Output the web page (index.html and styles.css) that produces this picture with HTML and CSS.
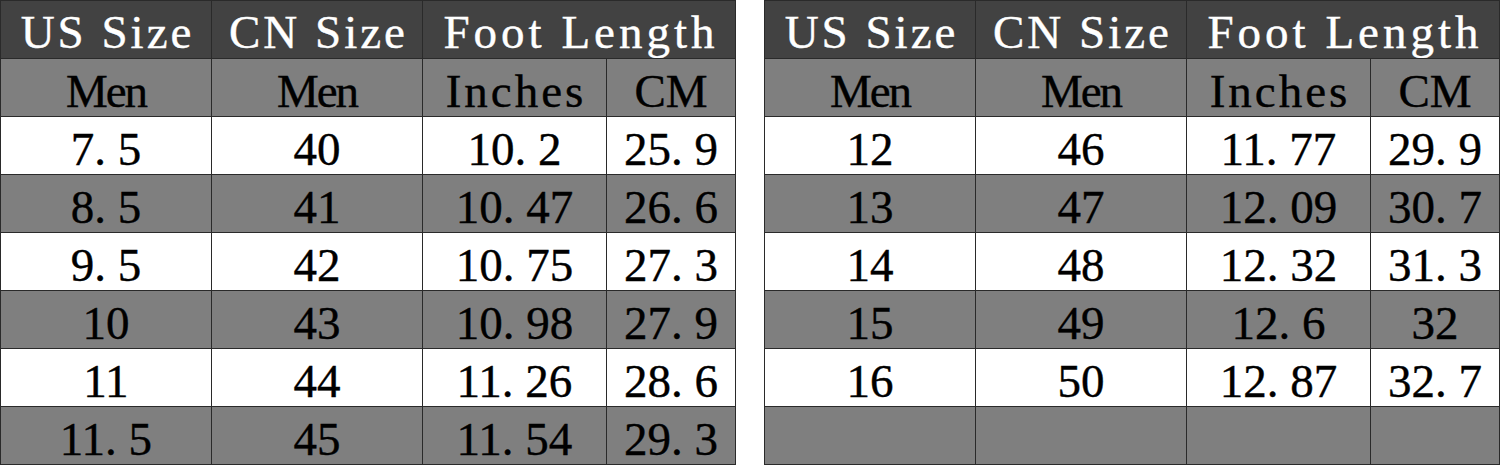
FILE: index.html
```html
<!DOCTYPE html>
<html>
<head>
<meta charset="utf-8">
<link rel="stylesheet" href="styles.css">
</head>
<body>
<div class="page">
  <div class="chart">
    <div class="cell head">US Size</div>
    <div class="cell head">CN Size</div>
    <div class="cell head span2">Foot Length</div>
    <div class="cell sub men">Men</div>
    <div class="cell sub men">Men</div>
    <div class="cell sub inches">Inches</div>
    <div class="cell sub">CM</div>

    <div class="cell w">7. 5</div><div class="cell w">40</div><div class="cell w">10. 2</div><div class="cell w">25. 9</div>
    <div class="cell g">8. 5</div><div class="cell g">41</div><div class="cell g">10. 47</div><div class="cell g">26. 6</div>
    <div class="cell w">9. 5</div><div class="cell w">42</div><div class="cell w">10. 75</div><div class="cell w">27. 3</div>
    <div class="cell g">10</div><div class="cell g">43</div><div class="cell g">10. 98</div><div class="cell g">27. 9</div>
    <div class="cell w">11</div><div class="cell w">44</div><div class="cell w">11. 26</div><div class="cell w">28. 6</div>
    <div class="cell g">11. 5</div><div class="cell g">45</div><div class="cell g">11. 54</div><div class="cell g">29. 3</div>
  </div>
  <div class="chart">
    <div class="cell head">US Size</div>
    <div class="cell head">CN Size</div>
    <div class="cell head span2">Foot Length</div>
    <div class="cell sub men">Men</div>
    <div class="cell sub men">Men</div>
    <div class="cell sub inches">Inches</div>
    <div class="cell sub">CM</div>

    <div class="cell w">12</div><div class="cell w">46</div><div class="cell w">11. 77</div><div class="cell w">29. 9</div>
    <div class="cell g">13</div><div class="cell g">47</div><div class="cell g">12. 09</div><div class="cell g">30. 7</div>
    <div class="cell w">14</div><div class="cell w">48</div><div class="cell w">12. 32</div><div class="cell w">31. 3</div>
    <div class="cell g">15</div><div class="cell g">49</div><div class="cell g">12. 6</div><div class="cell g">32</div>
    <div class="cell w">16</div><div class="cell w">50</div><div class="cell w">12. 87</div><div class="cell w">32. 7</div>
    <div class="cell g"></div><div class="cell g"></div><div class="cell g"></div><div class="cell g"></div>
  </div>
</div>
</body>
</html>
```

FILE: styles.css
```css
html, body {
  margin: 0;
  padding: 0;
  background: #ffffff;
}

.page {
  display: flex;
  gap: 28px;
  width: 1500px;
  height: 465px;
  overflow: hidden;
}

.chart {
  display: grid;
  grid-template-columns: 210px 210px 183px 128px;
  grid-auto-rows: 57px;
  gap: 1px;
  padding: 1px;
  background: #2a2a2a;
  width: 736px;
  box-sizing: border-box;
}

.cell {
  font-family: "Liberation Serif", "Times New Roman", serif;
  font-size: 47px;
  line-height: 51px;
  padding-top: 7px;
  box-sizing: border-box;
  height: 57px;
  text-align: center;
  color: #000000;
  white-space: nowrap;
  overflow: hidden;
  -webkit-text-stroke: 0.4px currentColor;
}

.head {
  background: #424242;
  color: #ffffff;
  letter-spacing: 3px;
  text-indent: 3px;
  padding-top: 6px;
}

.span2 {
  grid-column: span 2;
  letter-spacing: 4px;
  text-indent: 4px;
}

.sub {
  background: #7f7f7f;
}

.men {
  letter-spacing: -2px;
}

.inches {
  letter-spacing: 3px;
  text-indent: 3px;
}

.w {
  background: #ffffff;
}

.g {
  background: #7f7f7f;
}
```
